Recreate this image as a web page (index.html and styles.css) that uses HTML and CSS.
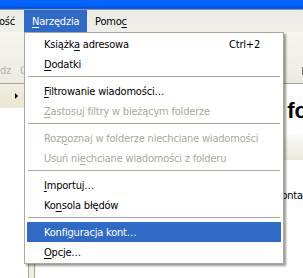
FILE: index.html
```html
<!DOCTYPE html>
<html lang="pl">
<head>
<meta charset="utf-8">
<title>Narzędzia</title>
<link rel="stylesheet" href="styles.css">
</head>
<body>
<div class="screen">
  <div class="titlebar"></div>
  <div class="menubar">
    <span class="mb-item mb-cut"><span>Wiadomość</span></span>
    <span class="mb-item active"><u>N</u>arzędzia</span>
    <span class="mb-item">Pomo<u>c</u></span>
  </div>
  <div class="toolbar">
    <span class="tb-label">dz</span>
    <span class="tb-label">O</span>
    <span class="tb-sep"></span>
  </div>
  <div class="main">
    <div class="folderpane">
      <div class="fp-header"><span class="tri"></span></div>
    </div>
    <div class="splitter"></div>
    <div class="content">
      <h1 class="ac-title">Lokalne foldery</h1>
      <div class="ac-section">Konta</div>
      <div class="ac-link">Wyświetl ustawienia tego konta</div>
    </div>
  </div>

  <div class="dropdown">
    <div class="mi"><span>Książk<u>a</u> adresowa</span><span class="acc">Ctrl+2</span></div>
    <div class="mi"><span><u>D</u>odatki</span></div>
    <div class="sep"></div>
    <div class="mi"><span><u>F</u>iltrowanie wiadomości…</span></div>
    <div class="mi disabled"><span><u>Z</u>astosuj filtry w bieżącym folderze</span></div>
    <div class="sep"></div>
    <div class="mi disabled"><span>Roz<u>p</u>oznaj w folderze niechciane wiadomości</span></div>
    <div class="mi disabled"><span>Usuń ni<u>e</u>chciane wiadomości z folderu</span></div>
    <div class="sep"></div>
    <div class="mi"><span><u>I</u>mportuj…</span></div>
    <div class="mi"><span>Ko<u>n</u>sola błędów</span></div>
    <div class="sep"></div>
    <div class="mi hover"><span>Konfi<u>g</u>uracja kont…</span></div>
    <div class="mi"><span><u>O</u>pcje…</span></div>
  </div>
</div>
</body>
</html>
```

FILE: styles.css
```css
* { box-sizing: border-box; }
html, body { margin: 0; padding: 0; }
body {
  background: #fff;
  font-family: "DejaVu Sans Condensed", "Liberation Sans", sans-serif;
  font-size: 11px;
  letter-spacing: -0.2px;
  color: #000;
}
u { text-decoration: underline; text-underline-offset: 2px; }

.screen {
  position: relative;
  width: 303px;
  height: 278px;
  overflow: hidden;
  display: flex;
  flex-direction: column;
}

.titlebar {
  height: 10px;
  flex: none;
  background: linear-gradient(#0a66ff 0%, #0060fa 60%, #0050d8 80%, #2a5fb8 90%, #d9d7cc 100%);
}

.menubar {
  height: 22px;
  flex: none;
  display: flex;
  align-items: stretch;
  background: linear-gradient(#ecebe5, #efeee8);
}
.mb-item { display: flex; align-items: center; padding-left: 8px; line-height: 1; }
.mb-cut { width: 24px; padding: 0 9px 0 0; justify-content: flex-end; overflow: hidden; white-space: nowrap; }
.mb-cut span { flex: none; }
.mb-item.active { width: 63px; background: #316ac5; color: #fff; }

.toolbar {
  height: 52px;
  flex: none;
  display: flex;
  align-items: flex-end;
  gap: 9px;
  padding-bottom: 6px;
  background: linear-gradient(#f6f5f0, #ecebe3);
  border-bottom: 1px solid #a6a397;
}
.tb-label { color: #b5b2a5; font-size: 11px; line-height: 13px; }
.tb-sep { margin-left: auto; width: 1px; height: 8px; margin-bottom: 2px; background: #7f7d74; }

.main { flex: 1; display: flex; min-height: 0; }
.folderpane { width: 28px; flex: none; background: #fff; }
.fp-header {
  height: 24px;
  background: linear-gradient(#f1efe2, #e9e6d5);
  display: flex;
  align-items: center;
  padding-left: 15px;
}
.tri {
  width: 0; height: 0;
  border-top: 3px solid transparent;
  border-bottom: 3px solid transparent;
  border-left: 3px solid #000;
}
.splitter {
  width: 7px;
  flex: none;
  background: #f1efe2;
  border-left: 1px solid #aca899;
  border-right: 1px solid #aca899;
}
.content { flex: 1; background: #fff; padding-left: 163px; overflow: hidden; white-space: nowrap; }
.ac-title {
  margin: 14px 0 0;
  font-family: "Liberation Sans", sans-serif;
  font-weight: bold;
  font-size: 22px;
  letter-spacing: 0;
  line-height: 26px;
}
.ac-section {
  margin: 11px 0 0 -163px;
  height: 25px;
  background: linear-gradient(#fbfbf8, #eae8dc);
  color: transparent;
}
.ac-link { margin: 29px 0 0 -46px; line-height: 13px; }

.dropdown {
  position: absolute;
  left: 24px;
  top: 32px;
  width: 260px;
  height: 232px;
  padding: 1px 0 1px;
  background: #fff;
  border: 1px solid #aca899;
  box-shadow: 2px 2px 2px rgba(0, 0, 0, 0.4);
}
.mi {
  height: 20px;
  margin: 0 2px;
  padding: 0 21px 0 17px;
  display: flex;
  align-items: center;
  justify-content: space-between;
  white-space: nowrap;
}
.mi.disabled { color: #aca899; }
.mi.hover { background: #316ac5; color: #fff; }
.sep {
  height: 7px;
  margin: 0 3px;
  padding-top: 2px;
}
.sep::before { content: ""; display: block; height: 1px; background: #aca899; }
```
